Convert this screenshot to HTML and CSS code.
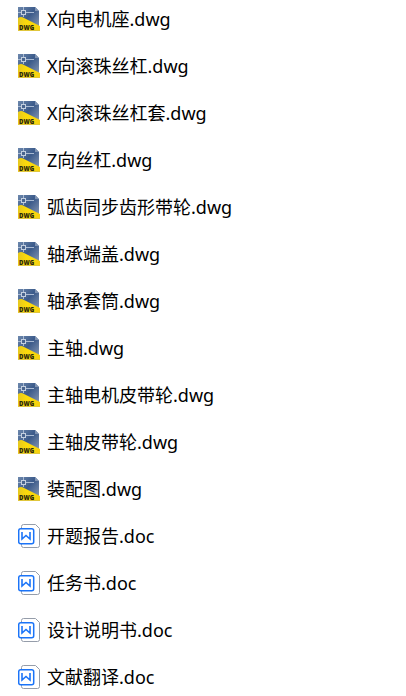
FILE: index.html
```html
<!DOCTYPE html>
<html lang="zh-CN">
<head>
    <meta charset="UTF-8">
    <meta name="viewport" content="width=device-width, initial-scale=1.0">
    <title>文件列表</title>
    <link rel="stylesheet" href="styles.css">
</head>
<body>
    <!-- Icon shapes shared by the list -->
    <svg class="icon-defs" aria-hidden="true">
        <defs>
            <linearGradient id="dwg-blue" x1="0" y1="0" x2="1" y2="1">
                <stop offset="0" stop-color="#6d88ad"/>
                <stop offset="0.45" stop-color="#3b5a8a"/>
                <stop offset="1" stop-color="#93a2b9"/>
            </linearGradient>
            <linearGradient id="dwg-yellow" x1="0" y1="0" x2="1" y2="0">
                <stop offset="0" stop-color="#e6c81f"/>
                <stop offset="0.4" stop-color="#fbdb0a"/>
                <stop offset="1" stop-color="#f6d010"/>
            </linearGradient>
        </defs>
        <symbol id="icon-dwg" viewBox="0 0 22 24">
            <path d="M0 0H17L21 4V24H0Z" fill="url(#dwg-blue)"/>
            <path d="M17 0L21 4H17Z" fill="#7f93b2"/>
            <path d="M0 11Q3 9 6 11L22 19V24H0Z" fill="url(#dwg-yellow)"/>
            <path d="M5.500 0V3M0 5.500H3M8 5.500H16M5.500 8V10" fill="none" stroke="#a9bad2" stroke-width="1"/>
            <rect x="3.500" y="3.500" width="4" height="4" fill="#49658f" stroke="#c3cfdf"/>
            <path d="M0 23.500H22" stroke="#e0c63c" stroke-width="1"/>
        </symbol>
        <symbol id="icon-doc" viewBox="0 0 22 24">
            <path d="M3.500 4V2.500Q3.500 0.500 5.500 0.500H17.500L21.500 4.500V21.500Q21.500 23.500 19.500 23.500H5.500Q3.500 23.500 3.500 21.500V20" fill="#fff" stroke="#959daa"/>
            <rect x="0.700" y="4.700" width="15" height="15" rx="2" fill="#fff" stroke="#1b74f8" stroke-width="1.500"/>
            <path d="M4 8V15L8 11.500L12 15V8" fill="none" stroke="#1b74f8" stroke-width="1.600"/>
        </symbol>
    </svg>

    <main>
        <ul class="file-list">
            <li class="file"><svg class="file-icon" aria-hidden="true"><use href="#icon-dwg"/><text class="icon-label" x="1" y="23">DWG</text></svg><span class="file-name">X向电机座.dwg</span></li>
            <li class="file"><svg class="file-icon" aria-hidden="true"><use href="#icon-dwg"/><text class="icon-label" x="1" y="23">DWG</text></svg><span class="file-name">X向滚珠丝杠.dwg</span></li>
            <li class="file"><svg class="file-icon" aria-hidden="true"><use href="#icon-dwg"/><text class="icon-label" x="1" y="23">DWG</text></svg><span class="file-name">X向滚珠丝杠套.dwg</span></li>
            <li class="file"><svg class="file-icon" aria-hidden="true"><use href="#icon-dwg"/><text class="icon-label" x="1" y="23">DWG</text></svg><span class="file-name">Z向丝杠.dwg</span></li>
            <li class="file"><svg class="file-icon" aria-hidden="true"><use href="#icon-dwg"/><text class="icon-label" x="1" y="23">DWG</text></svg><span class="file-name">弧齿同步齿形带轮.dwg</span></li>
            <li class="file"><svg class="file-icon" aria-hidden="true"><use href="#icon-dwg"/><text class="icon-label" x="1" y="23">DWG</text></svg><span class="file-name">轴承端盖.dwg</span></li>
            <li class="file"><svg class="file-icon" aria-hidden="true"><use href="#icon-dwg"/><text class="icon-label" x="1" y="23">DWG</text></svg><span class="file-name">轴承套筒.dwg</span></li>
            <li class="file"><svg class="file-icon" aria-hidden="true"><use href="#icon-dwg"/><text class="icon-label" x="1" y="23">DWG</text></svg><span class="file-name">主轴.dwg</span></li>
            <li class="file"><svg class="file-icon" aria-hidden="true"><use href="#icon-dwg"/><text class="icon-label" x="1" y="23">DWG</text></svg><span class="file-name">主轴电机皮带轮.dwg</span></li>
            <li class="file"><svg class="file-icon" aria-hidden="true"><use href="#icon-dwg"/><text class="icon-label" x="1" y="23">DWG</text></svg><span class="file-name">主轴皮带轮.dwg</span></li>
            <li class="file"><svg class="file-icon" aria-hidden="true"><use href="#icon-dwg"/><text class="icon-label" x="1" y="23">DWG</text></svg><span class="file-name">装配图.dwg</span></li>
            <li class="file"><svg class="file-icon" aria-hidden="true"><use href="#icon-doc"/></svg><span class="file-name">开题报告.doc</span></li>
            <li class="file"><svg class="file-icon" aria-hidden="true"><use href="#icon-doc"/></svg><span class="file-name">任务书.doc</span></li>
            <li class="file"><svg class="file-icon" aria-hidden="true"><use href="#icon-doc"/></svg><span class="file-name">设计说明书.doc</span></li>
            <li class="file"><svg class="file-icon" aria-hidden="true"><use href="#icon-doc"/></svg><span class="file-name">文献翻译.doc</span></li>
        </ul>
    </main>
</body>
</html>
```

FILE: styles.css
```css
body {
    font-family: "Noto Sans", "Noto Sans CJK SC", sans-serif;
    margin: 0;
    background-color: #fff;
    color: #000;
}

.icon-defs {
    position: absolute;
    width: 0;
    height: 0;
}

/* File list */
.file-list {
    display: flex;
    flex-direction: column;
    gap: 23px;
    margin: 0;
    padding: 7px 18px;
    list-style: none;
}

.file {
    display: flex;
    align-items: center;
    gap: 7px;
}

.file-icon {
    flex: none;
    width: 22px;
    height: 24px;
}

.icon-label {
    font-family: "Open Sans", sans-serif;
    font-size: 6px;
    font-weight: 800;
    fill: #29260c;
}

.file-name {
    font-size: 18px;
    line-height: 24px;
}
```
